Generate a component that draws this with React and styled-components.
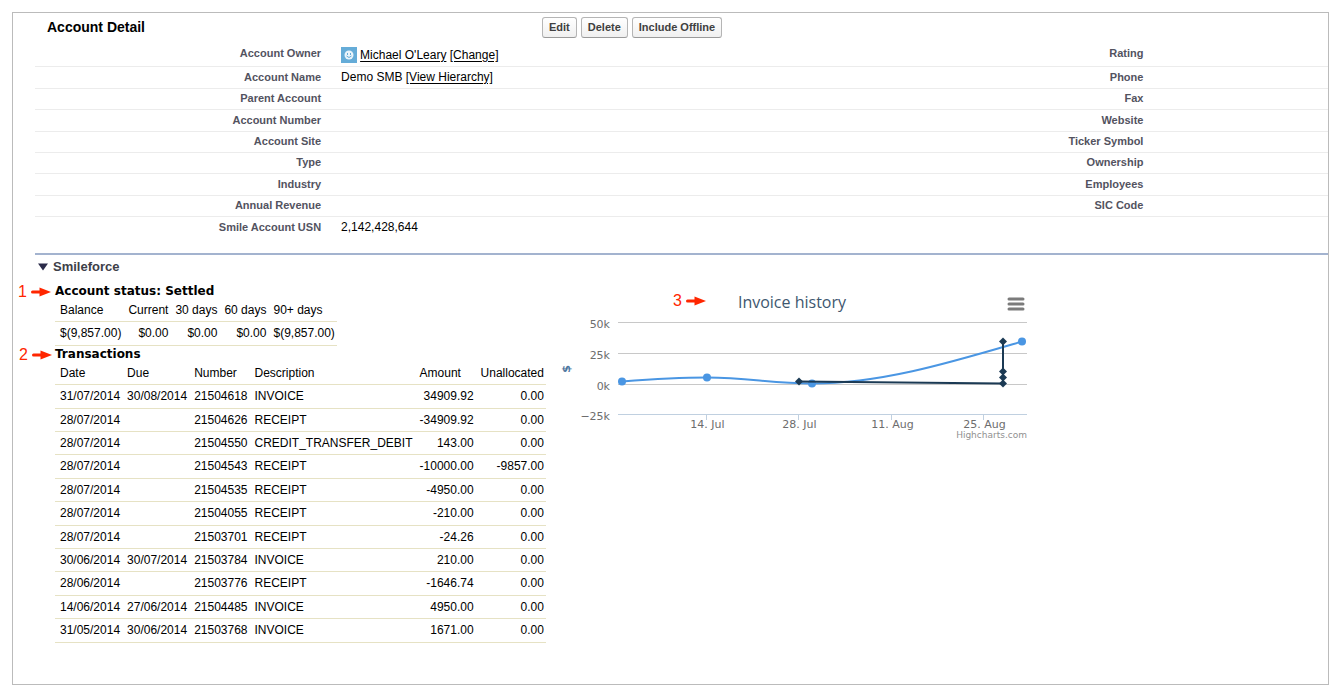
import styled, { createGlobalStyle } from "styled-components";

const GlobalStyle = createGlobalStyle`
  * {
    box-sizing: border-box;
  }
  body {
    margin: 0;
    background: #fff;
    color: #000;
    font-family: "Liberation Sans", Arial, sans-serif;
    font-size: 12px;
  }
`;

const Page = styled.div`
  display: flex;
  min-height: 100vh;
  padding: 12px 10px 10px 12px;
`;

const Frame = styled.main`
  flex: 1;
  padding-left: 22px;
  border: 1px solid #bbb;
`;

const Header = styled.header`
  display: grid;
  grid-template-columns: 495px 1fr;
  align-items: center;
  height: 29px;
  padding-left: 12px;
`;

const Title = styled.h1`
  margin: 0;
  padding-bottom: 2px;
  font-size: 14px;
  line-height: 18px;
`;

const Buttons = styled.div`
  display: flex;
  gap: 4px;
`;

const Button = styled.button`
  height: 21px;
  padding: 0 6px 1px;
  border: 1px solid #b5b5b5;
  border-bottom-color: #9a9a9a;
  border-radius: 3px;
  background: linear-gradient(#fff, #f0f0f0);
  color: #404040;
  font: bold 11px "Liberation Sans", Arial, sans-serif;
  cursor: pointer;
`;

const Details = styled.table`
  width: 100%;
  table-layout: fixed;
  border-collapse: separate;
  border-spacing: 0;

  tr {
    height: 21px;
  }
  tr:nth-child(5n + 2),
  tr:nth-child(5n + 4) {
    height: 22px;
  }
  tr:first-child {
    height: 25px;
  }
  th,
  td {
    padding: 0 10px 2px;
    border-bottom: 1px solid #ececec;
    line-height: 16px;
    white-space: nowrap;
  }
  tr:last-child > * {
    border-bottom: 0;
  }
  th {
    color: #53535f;
    font-size: 11px;
    text-align: right;
  }
`;

const LabelCol = styled.col`
  width: ${(props) => props.$width};
`;

const ValueCol = styled.col`
  width: ${(props) => props.$width};
`;

const Owner = styled.span`
  display: flex;
  align-items: center;
  gap: 3px;
  padding-top: 3px;
`;

const Link = styled.a`
  color: #000;
  text-decoration: underline;
  text-underline-offset: 2px;
`;

const Section = styled.section`
  margin-top: 14px;
  border-top: 2px solid #a3b3cf;
`;

const SectionTitle = styled.h2`
  display: flex;
  align-items: center;
  gap: 5px;
  margin: 0;
  padding: 3px 0 0 3px;
  color: #3d4048;
  font-size: 13px;
  line-height: 18px;
`;

const Columns = styled.div`
  display: flex;
  align-items: flex-start;
  padding: 7px 0 0 20px;
`;

const BlockTitle = styled.h3`
  position: relative;
  width: max-content;
  margin: 0;
  font: bold 12px/17px "DejaVu Sans", Verdana, sans-serif;
`;

const MarkerBox = styled.span`
  position: absolute;
  top: 0;
  right: 100%;
  display: flex;
  align-items: center;
  gap: 4px;
  margin-right: ${(props) => props.$gap || "4px"};
  color: #ff2600;
  font: 16px/17px "Liberation Sans", Arial, sans-serif;
`;

const Ledger = styled.table`
  border-collapse: separate;
  border-spacing: 0;

  th,
  td {
    padding: 0 2px 0 5px;
    border-bottom: 1px solid #e6e2c4;
    white-space: nowrap;
  }
  td {
    padding-bottom: 1px;
  }
  th {
    height: 22px;
    padding-bottom: 2px;
    font-weight: normal;
    text-align: left;
  }
  tbody tr {
    height: 23px;
  }
  tbody tr:nth-child(5n + 1),
  tbody tr:nth-child(5n + 4) {
    height: 24px;
  }
`;

const Cell = styled.td`
  text-align: ${(props) => (props.$number ? "right" : "left")};
`;

const ChartBox = styled.figure`
  flex: 0 1 490px;
  margin: 0 0 0 1px;
`;

const ChartHeader = styled.div`
  position: relative;
  display: flex;
  justify-content: center;
  padding-top: 9px;
`;

const ChartTitle = styled.h3`
  position: relative;
  margin: 0;
  color: #3e576f;
  font: 16px/20px "Open Sans", "Lucida Grande", sans-serif;
`;

const MenuButton = styled.button`
  position: absolute;
  top: 14px;
  right: 12px;
  padding: 0;
  border: 0;
  background: none;
  line-height: 0;
  cursor: pointer;
`;

const Plot = styled.svg`
  display: block;
  width: 100%;
  font-family: "DejaVu Sans", "Lucida Grande", sans-serif;
  font-size: 11px;
  fill: #6d6d6d;
`;

const details = [
  ["Account Owner", "Rating"],
  ["Account Name", "Phone"],
  ["Parent Account", "Fax"],
  ["Account Number", "Website"],
  ["Account Site", "Ticker Symbol"],
  ["Type", "Ownership"],
  ["Industry", "Employees"],
  ["Annual Revenue", "SIC Code"],
  ["Smile Account USN", ""],
];

const balanceHeads = ["Balance", "Current", "30 days", "60 days", "90+ days"];
const balances = ["$(9,857.00)", "$0.00", "$0.00", "$0.00", "$(9,857.00)"];

const transactionHeads = [
  "Date",
  "Due",
  "Number",
  "Description",
  "Amount",
  "Unallocated",
];

const transactions = [
  ["31/07/2014", "30/08/2014", "21504618", "INVOICE", "34909.92", "0.00"],
  ["28/07/2014", "", "21504626", "RECEIPT", "-34909.92", "0.00"],
  ["28/07/2014", "", "21504550", "CREDIT_TRANSFER_DEBIT", "143.00", "0.00"],
  ["28/07/2014", "", "21504543", "RECEIPT", "-10000.00", "-9857.00"],
  ["28/07/2014", "", "21504535", "RECEIPT", "-4950.00", "0.00"],
  ["28/07/2014", "", "21504055", "RECEIPT", "-210.00", "0.00"],
  ["28/07/2014", "", "21503701", "RECEIPT", "-24.26", "0.00"],
  ["30/06/2014", "30/07/2014", "21503784", "INVOICE", "210.00", "0.00"],
  ["28/06/2014", "", "21503776", "RECEIPT", "-1646.74", "0.00"],
  ["14/06/2014", "27/06/2014", "21504485", "INVOICE", "4950.00", "0.00"],
  ["31/05/2014", "30/06/2014", "21503768", "INVOICE", "1671.00", "0.00"],
];

const yTicks = [
  { label: "50k", y: 10.5 },
  { label: "25k", y: 41.5 },
  { label: "0k", y: 72.5 },
  { label: "−25k", y: 102.5 },
];

const xTicks = [
  { label: "14. Jul", x: 159.5 },
  { label: "28. Jul", x: 251.5 },
  { label: "11. Aug", x: 344.5 },
  { label: "25. Aug", x: 436.5 },
];

const invoices = [
  [75, 69.5],
  [160, 65.5],
  [265, 71.5],
  [475, 29.5],
];

const payments = [
  [252, 69.5],
  [456, 71.5],
  [456, 65.5],
  [456, 59.5],
  [456, 29.5],
];

const Marker = ({ number, gap }) => (
  <MarkerBox $gap={gap}>
    {number}
    <svg width="20" height="10" viewBox="0 0 20 10" aria-hidden="true">
      <path d="M1.5 5H10" stroke="#ff2600" strokeWidth="3" strokeLinecap="round" />
      <path d="M8.5 0.5L20 5L8.5 9.5Z" fill="#ff2600" />
    </svg>
  </MarkerBox>
);

const OwnerIcon = () => (
  <svg width="16" height="16" viewBox="0 0 16 16" aria-hidden="true">
    <rect width="16" height="16" fill="#65acd8" />
    <circle cx="8" cy="8" r="4.5" fill="#e9f4fb" />
    <rect x="6" y="6" width="1" height="2" fill="#65acd8" />
    <rect x="9" y="6" width="1" height="2" fill="#65acd8" />
    <path d="M5.5 9Q8 12 10.5 9" fill="none" stroke="#65acd8" />
  </svg>
);

const DetailValue = ({ label }) => {
  if (label === "Account Owner") {
    return (
      <Owner>
        <OwnerIcon />
        <span>
          <Link href="#owner">Michael O'Leary</Link>{" "}
          <Link href="#change">[Change]</Link>
        </span>
      </Owner>
    );
  }
  if (label === "Account Name") {
    return (
      <>
        Demo SMB <Link href="#hierarchy">[View Hierarchy]</Link>
      </>
    );
  }
  return label === "Smile Account USN" ? "2,142,428,644" : null;
};

const InvoiceChart = () => (
  <ChartBox>
    <ChartHeader>
      <ChartTitle>
        <Marker number="3" gap="32px" />
        Invoice history
      </ChartTitle>
      <MenuButton type="button" aria-label="Chart menu">
        <svg width="18" height="14" viewBox="0 0 18 14">
          <path
            d="M2 2H16M2 7H16M2 12H16"
            stroke="#7b7b7b"
            strokeWidth="3"
            strokeLinecap="round"
          />
        </svg>
      </MenuButton>
    </ChartHeader>
    <Plot viewBox="0 0 490 132" role="img" aria-label="Invoice history">
      {yTicks.map(({ label, y }, i) => (
        <g key={label}>
          <path
            d={`M71 ${y}H480`}
            stroke={i === yTicks.length - 1 ? "#c0d0e0" : "#c8c8c8"}
          />
          <text x="63" y={y + 5} textAnchor="end">
            {label}
          </text>
        </g>
      ))}
      {xTicks.map(({ label, x }) => (
        <g key={label}>
          <path d={`M${x} 103V108`} stroke="#c0d0e0" />
          <text x={x + 1} y="116" textAnchor="middle">
            {label}
          </text>
        </g>
      ))}
      <text
        transform="translate(23 57) rotate(-90)"
        textAnchor="middle"
        fontWeight="bold"
        fill="#4d759e"
      >
        $
      </text>
      <path
        d="M75 69.5C75 69.5 126 65.5 160 65.5C202 65.5 223 71.5 265 71.5C335 71.5 405 50 475 29.5"
        fill="none"
        stroke="#4a96e3"
        strokeWidth="2"
      />
      {invoices.map(([x, y]) => (
        <circle key={x} cx={x} cy={y} r="4" fill="#4a96e3" />
      ))}
      <polyline
        points={payments.join(" ")}
        fill="none"
        stroke="#1b3a54"
        strokeWidth="2"
      />
      {payments.map(([x, y]) => (
        <path
          key={`${x}-${y}`}
          d={`M${x} ${y - 4}l4 4l-4 4l-4 -4z`}
          fill="#1b3a54"
        />
      ))}
      <text x="480" y="126" textAnchor="end" fontSize="9" fill="#909090">
        Highcharts.com
      </text>
    </Plot>
  </ChartBox>
);

const App = () => {
  return (
    <>
      <GlobalStyle />
      <Page>
        <Frame>
          <Header>
            <Title>Account Detail</Title>
            <Buttons>
              <Button type="button">Edit</Button>
              <Button type="button">Delete</Button>
              <Button type="button">Include Offline</Button>
            </Buttons>
          </Header>
          <Details>
            <colgroup>
              <LabelCol $width="22.9%" />
              <ValueCol $width="40%" />
              <LabelCol $width="23.6%" />
              <ValueCol $width="13.5%" />
            </colgroup>
            <tbody>
              {details.map(([left, right]) => (
                <tr key={left}>
                  <th scope="row">{left}</th>
                  <td>
                    <DetailValue label={left} />
                  </td>
                  <th scope="row">{right}</th>
                  <td />
                </tr>
              ))}
            </tbody>
          </Details>
          <Section>
            <SectionTitle>
              <svg width="10" height="8" viewBox="0 0 10 8" aria-hidden="true">
                <path d="M0 0.5H10L5 7.5Z" fill="#2b2b4a" />
              </svg>
              Smileforce
            </SectionTitle>
            <Columns>
              <div>
                <BlockTitle>
                  <Marker number="1" />
                  Account status: Settled
                </BlockTitle>
                <Ledger>
                  <thead>
                    <tr>
                      {balanceHeads.map((head) => (
                        <th key={head} scope="col">
                          {head}
                        </th>
                      ))}
                    </tr>
                  </thead>
                  <tbody>
                    <tr>
                      {balances.map((value, i) => (
                        <Cell key={balanceHeads[i]} $number>
                          {value}
                        </Cell>
                      ))}
                    </tr>
                  </tbody>
                </Ledger>
                <BlockTitle>
                  <Marker number="2" gap="3px" />
                  Transactions
                </BlockTitle>
                <Ledger>
                  <thead>
                    <tr>
                      {transactionHeads.map((head) => (
                        <th key={head} scope="col">
                          {head}
                        </th>
                      ))}
                    </tr>
                  </thead>
                  <tbody>
                    {transactions.map((row) => (
                      <tr key={row[2]}>
                        {row.map((value, i) => (
                          <Cell key={transactionHeads[i]} $number={i > 3}>
                            {value}
                          </Cell>
                        ))}
                      </tr>
                    ))}
                  </tbody>
                </Ledger>
              </div>
              <InvoiceChart />
            </Columns>
          </Section>
        </Frame>
      </Page>
    </>
  );
};

export default App;
